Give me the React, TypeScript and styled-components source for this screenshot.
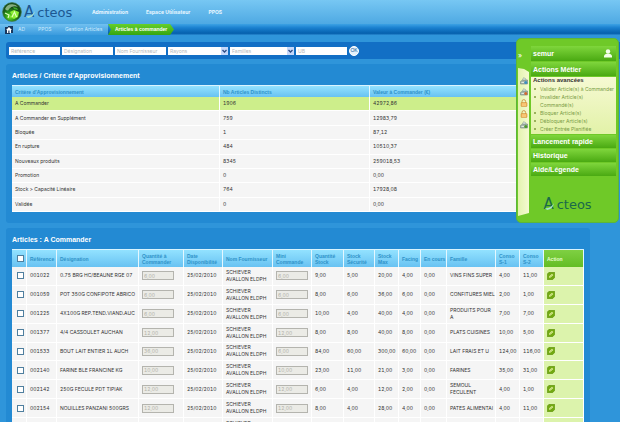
import React from "react";
import styled, { createGlobalStyle } from "styled-components";

const GlobalStyle = createGlobalStyle`
  * { box-sizing: border-box; }
  body { margin: 0; background: #2f95da; }
  body, button, input, select, table {
    font-family: Inter, "Liberation Sans", sans-serif;
    font-size: 5px;
    line-height: 7px;
    font-variant-numeric: tabular-nums;
  }
`;

const Page = styled.div`
  position: relative;
  height: 100vh;
  overflow: hidden;
  background: #2f95da;
  color: #333;
`;

const Header = styled.header`
  display: flex;
  align-items: center;
  height: 24px;
  padding-left: 2px;
  background: linear-gradient(#77c7f3, #4ea9e3);
`;

const Brand = styled.a`
  display: flex;
  align-items: center;
  width: 90px;
  gap: 2px;
  text-decoration: none;
`;

const WordmarkBox = styled.span<{ $color: string }>`
  position: relative;
  display: flex;
  align-items: baseline;
  font-family: "DejaVu Sans", sans-serif;
  font-size: 13px;
  line-height: 14px;
  color: ${(p) => p.$color};
`;

const WordmarkInitial = styled.span`
  font-size: 15px;
  padding-right: 3px;
`;

const Swoosh = styled.svg`
  position: absolute;
  left: 2px;
  top: 5px;
`;

const MainNav = styled.nav`
  display: flex;
  gap: 18px;
`;

const NavLink = styled.a`
  color: #e9f7ff;
  font-weight: bold;
  text-decoration: none;
`;

const Trail = styled.nav`
  display: flex;
  align-items: stretch;
  height: 11px;
  background: linear-gradient(#3ca2e4 0, #1a80cf 35%, #0560ad 85%, #2b8ad2 100%);
`;

const TrailLinks = styled.div`
  display: flex;
  align-items: center;
  width: 108px;
  padding-left: 5px;
  gap: 5px;
  background: linear-gradient(#71c0f0, #3a9bde);
`;

const TrailLink = styled.a<{ $width: number }>`
  width: ${(p) => p.$width}px;
  color: #cdeafc;
  text-decoration: none;
  white-space: nowrap;
`;

const Current = styled.span`
  display: flex;
  align-items: center;
  width: 66px;
  padding-left: 7px;
  color: #fff;
  white-space: nowrap;
  font-weight: bold;
  font-family: "Liberation Sans", Arial, sans-serif;
  background: linear-gradient(#66cf2a, #35a510);
  clip-path: polygon(0 0, calc(100% - 4px) 0, 100% 50%, calc(100% - 4px) 100%, 0 100%, 3px 50%);
`;

const Main = styled.main`
  padding: 7px 0 0 6px;
`;

const SearchBar = styled.form`
  display: flex;
  align-items: center;
  gap: 2px;
  height: 17px;
  padding-left: 3px;
  background: #126fc5;
  border-radius: 3px 0 0 3px;
`;

const SearchInput = styled.input`
  width: 51px;
  height: 8px;
  padding: 0 2px;
  border: 0;
  background: #fff;
  color: #555;
  &::placeholder { color: #b5b9bd; opacity: 1; }
`;

const SelectBox = styled.label<{ $width: number }>`
  display: flex;
  width: ${(p) => p.$width}px;
  height: 8px;
  background: #fff;
`;

const SelectField = styled.select`
  flex: 1;
  min-width: 0;
  height: 8px;
  padding: 0 2px;
  border: 0;
  appearance: none;
  background: #fff;
  color: #b5b9bd;
  line-height: 8px;
`;

const OkButton = styled.button`
  display: flex;
  align-items: center;
  justify-content: center;
  width: 10px;
  height: 10px;
  padding: 0;
  border: 1px solid #fff;
  border-radius: 50%;
  background: #e4f2fc;
  color: #125a9c;
  font-family: "Liberation Sans", Arial, sans-serif;
`;

const Panel = styled.section`
  margin-right: 30px;
  padding: 7px 6px 11px;
  background: #238ad3;
  border-radius: 3px;
`;

const Stack = styled.div`
  display: flex;
  flex-direction: column;
  gap: 5px;
`;

const Title = styled.h2`
  margin: 0 0 5px;
  color: #fff;
  font-family: "Liberation Sans", Arial, sans-serif;
  font-size: 7px;
  line-height: 9px;
`;

const Grid = styled.table<{ $height: number }>`
  width: 100%;
  height: ${(p) => p.$height}px;
  table-layout: fixed;
  border-collapse: separate;
  border-spacing: 0;
  background: #fff;
  border-top: 1px solid #d9f4ff;
`;

const Col = styled.col<{ $width: number }>`
  width: ${(p) => p.$width}px;
`;

const Th = styled.th<{ $tall?: boolean; $action?: boolean }>`
  height: ${(p) => (p.$tall ? 17 : 11)}px;
  padding: 0 0 0 3px;
  text-align: left;
  color: ${(p) => (p.$action ? "#e9ffd0" : "#2f92c8")};
  font-family: "Liberation Sans", Arial, sans-serif;
  line-height: 6px;
  border-right: 1px solid #e4f7ff;
  background: ${(p) => (p.$action ? "linear-gradient(#7fd043, #63bd24)" : "linear-gradient(#93e2ff, #68c2f2)")};
`;

const Td = styled.td<{ $tone?: "selected" | "action" }>`
  padding: 0 0 0 3px;
  border-right: 1px solid #fff;
  border-bottom: 1px solid #fff;
  background: ${(p) => (p.$tone === "selected" ? "#cdee8b" : p.$tone === "action" ? "#dcf3ac" : "#f5f5f5")};
`;

const OneLine = styled.span`
  display: block;
  white-space: nowrap;
`;

const Tick = styled.input`
  display: block;
  appearance: none;
  width: 7px;
  height: 7px;
  margin: 0 0 0 2px;
  border: 1px solid #4f7f9f;
  background: #fff;
`;

const QtyInput = styled.input`
  display: block;
  width: 32px;
  height: 9px;
  padding: 0 1px;
  border: 1px solid #b4b4ae;
  background: #ebebe6;
  color: #b2b2aa;
`;

const IconButton = styled.button`
  display: block;
  padding: 0;
  border: 0;
  background: none;
  line-height: 0;
`;

const Dock = styled.aside`
  position: absolute;
  top: 38px;
  right: 1px;
  display: flex;
  width: 103px;
  min-height: 185px;
  padding: 7px 2px 6px 1px;
  gap: 2px;
  border: 1px solid #5cb53a;
  border-radius: 5px;
  background: #6fc928;
`;

const Rail = styled.div`
  display: flex;
  flex-direction: column;
  width: 11px;
`;

const Collapse = styled.button`
  height: 22px;
  padding: 0 0 3px;
  border: 0;
  background: none;
  color: #fff;
  text-align: left;
  font-size: 7px;
`;

const RailIcons = styled.div`
  flex: 1;
  display: flex;
  flex-direction: column;
  align-items: center;
  gap: 3px;
  padding-top: 9px;
  background: linear-gradient(90deg, #e3f3ae, #f5fad2);
  clip-path: polygon(0 0, 55% 1px, 100% 4px, 100% calc(100% - 3px), 0 100%);
`;

const Menu = styled.div`
  flex: 1;
  display: flex;
  flex-direction: column;
  gap: 1px;
`;

const MenuHead = styled.button<{ $height: number }>`
  display: flex;
  align-items: center;
  justify-content: space-between;
  height: ${(p) => p.$height}px;
  padding: 0 4px 0 2px;
  border: 0;
  background: linear-gradient(#7fd63c, #4aa912);
  color: #fff;
  font-family: "Liberation Sans", Arial, sans-serif;
  font-size: 7px;
  font-weight: bold;
`;

const MenuBody = styled.div`
  padding: 0 0 1px 2px;
  background: linear-gradient(#f6f9d3, #e2f2a8);
`;

const MenuTitle = styled.h3`
  margin: 0 0 1px;
  font-family: "Liberation Sans", Arial, sans-serif;
  font-size: 6px;
  line-height: 7px;
  color: #333;
`;

const ActionList = styled.ul`
  margin: 0;
  padding: 0 0 0 7px;
  line-height: 8px;
  list-style: none;
`;

const ActionItem = styled.li`
  position: relative;
  &::before {
    content: "";
    position: absolute;
    left: -6px;
    top: 3px;
    width: 2px;
    height: 2px;
    border-radius: 50%;
    background: #7f9c3c;
  }
`;

const ActionLink = styled.a`
  color: #7a9c45;
  text-decoration: none;
`;

const DockBrand = styled.div`
  display: flex;
  justify-content: center;
  padding: 20px 12px 0 0;
`;

function Wordmark({ color }: { color: string }) {
  return (
    <WordmarkBox $color={color}>
      <WordmarkInitial>A</WordmarkInitial>cteos
      <Swoosh width="11" height="8" viewBox="0 0 11 8">
        <path d="M0 6 Q6 7 9 1 Q8 7 2 8Z" fill="#a6dfd0" />
      </Swoosh>
    </WordmarkBox>
  );
}

function GlobeIcon() {
  return (
    <svg width="20" height="20" viewBox="0 0 20 20" aria-hidden="true">
      <defs>
        <radialGradient id="globe" cx="40%" cy="75%">
          <stop offset="0" stopColor="#7be32a" />
          <stop offset=".5" stopColor="#2c9818" />
          <stop offset="1" stopColor="#164d18" />
        </radialGradient>
      </defs>
      <circle cx="10" cy="10" r="9.4" fill="url(#globe)" stroke="#3d7650" strokeWidth=".7" />
      <path d="M3 7Q5 2 10 2.200Q14 2 16 5Q10 3 7 7Q6 10 3 7Z" fill="#d0efc4" opacity=".6" />
      <path d="M8 10L12 8L17 10L16 15L12 17L8 15L10 13Z" fill="#8cec35" />
      <path d="M10 15L12.500 10L14.500 15M3 11L7 13L6 16" fill="none" stroke="#e4ffc4" strokeWidth="1.100" />
      <path d="M11 5L15 6L16 8L12 7Z" fill="#42ac29" />
    </svg>
  );
}

function HomeIcon() {
  return (
    <svg width="8" height="8" viewBox="0 0 8 8" aria-hidden="true">
      <path d="M0 1H3V0H8V7H5V8H0Z" fill="#17375e" />
      <path d="M1 4L4 1L7 4H6V7H4.500V4.500H3.300V7H2V4Z" fill="#fff" />
    </svg>
  );
}

function ArrowIcon() {
  return (
    <svg width="7" height="8" viewBox="0 0 7 8" aria-hidden="true">
      <rect width="7" height="8" fill="#c6d8fa" />
      <path d="M1.500 3L3.500 5L5.500 3" fill="none" stroke="#2e4d85" strokeWidth="1.300" />
    </svg>
  );
}

function UserIcon() {
  return (
    <svg width="8" height="9" viewBox="0 0 8 9" aria-hidden="true">
      <circle cx="4" cy="2.500" r="2.200" fill="#f3ffe8" />
      <path d="M0 8.500V6.500Q1 5 3 4.800H5Q7 5 8 6.500V8.500Z" fill="#f3ffe8" />
    </svg>
  );
}

function RailIcon({ kind }: { kind: string }) {
  if (kind === "lock") {
    return (
      <svg width="8" height="8" viewBox="0 0 8 8" aria-hidden="true">
        <path d="M2 4V2.500Q2 .6 3.800 .6T5.600 2.500V4" fill="none" stroke="#cf9b4d" />
        <rect x="1" y="3.500" width="6" height="4" rx=".6" fill="#f3b45a" stroke="#c98a35" strokeWidth=".5" />
        <path d="M2 5H6M2 6.200H6" stroke="#ffe0a0" strokeWidth=".6" />
      </svg>
    );
  }
  const mark = kind === "cancel" ? "#d3692f" : kind === "create" ? "#4d9a2c" : "#3f8fc0";
  return (
    <svg width="8" height="8" viewBox="0 0 8 8" aria-hidden="true">
      <path d="M.5 4.500L2.500 3H7.500V7H.5Z" fill="#a6b6ac" stroke="#71857e" strokeWidth=".6" />
      <path d="M2.500 3L3.500 .7L5.500 1.500L6 3Z" fill="#dce8e0" stroke="#819489" strokeWidth=".5" />
      <path d="M1.500 5.500H4" stroke="#edf5ee" strokeWidth=".8" />
      <circle cx="5.800" cy="5.600" r="1.500" fill={mark} />
    </svg>
  );
}

function LeafIcon() {
  return (
    <svg width="8" height="8" viewBox="0 0 8 8" aria-hidden="true">
      <path d="M2 .3H7.700V5.500L5.500 7.700H.3V2Z" fill="#72a911" stroke="#5c8e0b" strokeWidth=".6" />
      <path d="M2 5.800L2.200 4.300L5 1.700L6.300 2.900L3.500 5.600Z" fill="#e6f5a7" />
      <path d="M2.800 4.900L5.400 2.500" stroke="#86aa22" strokeWidth=".5" />
    </svg>
  );
}

const criteria = [
  ["A Commander", "1906", "42972,86"],
  ["A Commander en Supplément", "759", "12983,79"],
  ["Bloquée", "1", "87,12"],
  ["En rupture", "484", "10510,37"],
  ["Nouveaux produits", "8345", "259018,53"],
  ["Promotion", "0", "0,00"],
  ["Stock > Capacité Linéaire", "764", "17928,08"],
  ["Validée", "0", "0,00"],
];

const columns: [string, number][] = [
  ["Référence", 30], ["Désignation", 82], ["Quantité à Commander", 45], ["Date Disponibilité", 39],
  ["Nom Fournisseur", 50], ["Mini Commande", 39], ["Quantité Stock", 32], ["Stock Sécurité", 31],
  ["Stock Max", 24], ["Facing", 22], ["En cours", 26], ["Famille", 49], ["Conso S-1", 24], ["Conso S-2", 24],
];

const articles = [
  ["001022", "0.75 BRG HC/BEAUNE RGE 07", "6,00", "6,00", "9,00", "5,00", "20,00", "4,00", "VINS FINS SUPER", "4,00", "11,00"],
  ["001059", "POT 350G CONFIPOTE ABRICO", "6,00", "6,00", "8,00", "6,00", "36,00", "6,00", "CONFITURES MIEL", "2,00", "1,00"],
  ["001225", "4X100G REP.TEND.VIAND.AUC", "6,00", "6,00", "10,00", "4,00", "40,00", "4,00", "PRODUITS POUR A", "7,00", "7,00"],
  ["001377", "4/4 CASSOULET AUCHAN", "12,00", "12,00", "8,00", "8,00", "40,00", "8,00", "PLATS CUISINES", "10,00", "5,00"],
  ["001533", "BOUT LAIT ENTIER 1L AUCH", "36,00", "6,00", "84,00", "60,00", "300,00", "60,00", "LAIT FRAIS ET U", "124,00", "116,00"],
  ["002140", "FARINE BLE FRANCINE KG", "10,00", "10,00", "23,00", "11,00", "21,00", "3,00", "FARINES", "35,00", "31,00"],
  ["002142", "250G FECULE PDT TIPIAK", "12,00", "12,00", "6,00", "4,00", "12,00", "2,00", "SEMOUL FECULENT", "4,00", "1,00"],
  ["002154", "NOUILLES PANZANI 500GRS", "12,00", "12,00", "8,00", "4,00", "28,00", "4,00", "PATES ALIMENTAI", "4,00", "11,00"],
  ["002155", "COQUILLETTES PANZANI 500G", "12,00", "12,00", "8,00", "4,00", "28,00", "4,00", "PATES ALIMENTAI", "4,00", "11,00"],
];

const actions = [
  "Valider Article(s) à Commander",
  "Invalider Article(s) Commandé(s)",
  "Bloquer Article(s)",
  "Débloquer Article(s)",
  "Créer Entrée Planifiée",
];

export default function App() {
  return (
    <Page>
      <GlobalStyle />
      <Header>
        <Brand href="#"><GlobeIcon /><Wordmark color="#1c5792" /></Brand>
        <MainNav>
          <NavLink href="#">Administration</NavLink>
          <NavLink href="#">Espace Utilisateur</NavLink>
          <NavLink href="#">PPOS</NavLink>
        </MainNav>
      </Header>
      <Trail>
        <TrailLinks>
          <HomeIcon />
          <TrailLink href="#" $width={15}>AD</TrailLink>
          <TrailLink href="#" $width={22}>PPOS</TrailLink>
          <TrailLink href="#" $width={40}>Gestion Articles</TrailLink>
        </TrailLinks>
        <Current>Articles à commander</Current>
      </Trail>
      <Main>
        <Stack>
          <SearchBar>
            <SearchInput aria-label="Référence" placeholder="Référence" />
            <SearchInput aria-label="Désignation" placeholder="Désignation" />
            <SearchInput aria-label="Nom Fournisseur" placeholder="Nom Fournisseur" />
            <SelectBox $width={60}>
              <SelectField aria-label="Rayons"><option>Rayons</option></SelectField><ArrowIcon />
            </SelectBox>
            <SelectBox $width={64}>
              <SelectField aria-label="Familles"><option>Familles</option></SelectField><ArrowIcon />
            </SelectBox>
            <SearchInput aria-label="UB" placeholder="UB" />
            <OkButton type="button">OK</OkButton>
          </SearchBar>
          <Panel>
            <Title>Articles / Critère d'Approvisionnement</Title>
            <Grid $height={127}>
              <colgroup><Col $width={208} /><Col $width={150} /><Col $width={214} /></colgroup>
              <thead>
                <tr><Th>Critère d'Approvisionnement</Th><Th>Nb Articles Distincts</Th><Th>Valeur à Commander (€)</Th></tr>
              </thead>
              <tbody>
                {criteria.map((row, i) => (
                  <tr key={row[0]}>
                    {row.map((cell, j) => <Td key={j} $tone={i === 0 ? "selected" : undefined}>{cell}</Td>)}
                  </tr>
                ))}
              </tbody>
            </Grid>
          </Panel>
          <Panel>
            <Title>Articles : A Commander</Title>
            <Grid $height={188}>
              <colgroup>
                <Col $width={15} />
                {columns.map(([name, width]) => <Col key={name} $width={width} />)}
                <Col $width={40} />
              </colgroup>
              <thead>
                <tr>
                  <Th $tall><Tick type="checkbox" aria-label="Tout sélectionner" /></Th>
                  {columns.map(([name]) => <Th key={name} $tall>{name}</Th>)}
                  <Th $tall $action>Action</Th>
                </tr>
              </thead>
              <tbody>
                {articles.map(([ref, name, qty, mini, stock, safety, max, facing, family, s1, s2]) => (
                  <tr key={ref}>
                    <Td><Tick type="checkbox" aria-label={ref} /></Td>
                    <Td>{ref}</Td>
                    <Td><OneLine>{name}</OneLine></Td>
                    <Td><QtyInput aria-label={`Quantité ${ref}`} defaultValue={qty} disabled /></Td>
                    <Td>25/02/2010</Td>
                    <Td>SCHIEVER AVALLON ELDPH</Td>
                    <Td><QtyInput aria-label={`Mini ${ref}`} defaultValue={mini} disabled /></Td>
                    <Td>{stock}</Td>
                    <Td>{safety}</Td>
                    <Td>{max}</Td>
                    <Td>{facing}</Td>
                    <Td>0,00</Td>
                    <Td>{family}</Td>
                    <Td>{s1}</Td>
                    <Td>{s2}</Td>
                    <Td $tone="action"><IconButton aria-label={`Modifier ${ref}`}><LeafIcon /></IconButton></Td>
                  </tr>
                ))}
              </tbody>
            </Grid>
          </Panel>
        </Stack>
      </Main>
      <Dock>
        <Rail>
          <Collapse>»</Collapse>
          <RailIcons>
            {["validate", "cancel", "lock", "lock", "create"].map((kind, i) => <RailIcon key={i} kind={kind} />)}
          </RailIcons>
        </Rail>
        <Menu>
          <MenuHead $height={15}>semur<UserIcon /></MenuHead>
          <MenuHead $height={14}>Actions Métier</MenuHead>
          <MenuBody>
            <MenuTitle>Actions avancées</MenuTitle>
            <ActionList>
              {actions.map((label) => <ActionItem key={label}><ActionLink href="#">{label}</ActionLink></ActionItem>)}
            </ActionList>
          </MenuBody>
          <MenuHead $height={13}>Lancement rapide</MenuHead>
          <MenuHead $height={13}>Historique</MenuHead>
          <MenuHead $height={13}>Aide/Légende</MenuHead>
          <DockBrand><Wordmark color="#1a6a4a" /></DockBrand>
        </Menu>
      </Dock>
    </Page>
  );
}
